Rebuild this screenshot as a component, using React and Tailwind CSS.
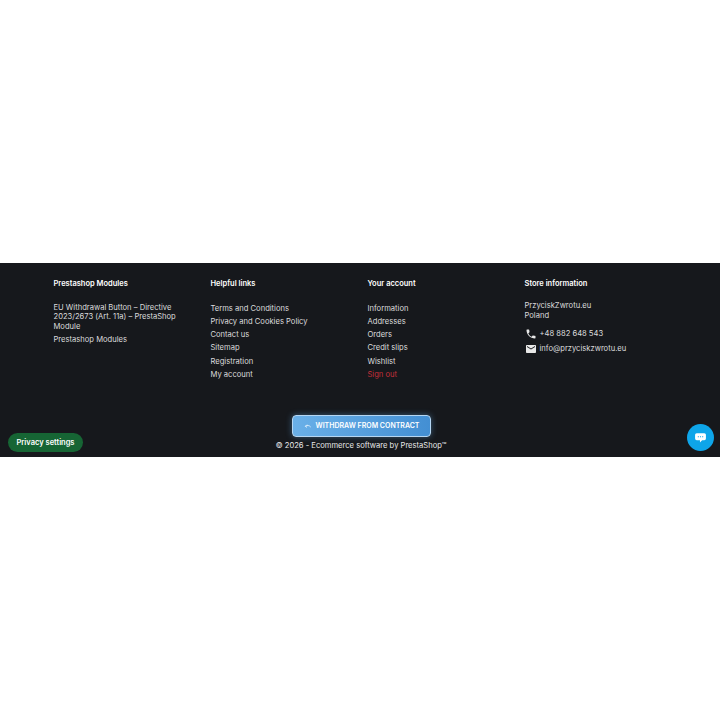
import React from 'react';

const helpful = ['Terms and Conditions', 'Privacy and Cookies Policy', 'Contact us', 'Sitemap', 'Registration', 'My account'];
const account = ['Information', 'Addresses', 'Orders', 'Credit slips', 'Wishlist'];

function Heading({ children }) {
    return <h3 className="text-[7.5px] leading-[12px] font-semibold text-white mb-[11.5px]">{children}</h3>;
}

function LinkList({ items }) {
    return (
        <ul className="flex flex-col">
            {items.map((item) => (
                <li key={item} className="h-[13.3px] leading-[13.3px]">{item}</li>
            ))}
        </ul>
    );
}

export default function App() {
    return (
        <div className="bg-white h-[720px] font-['Inter',sans-serif] flex flex-col">
            <div className="h-[263px]" />

            {/* Footer */}
            <footer className="relative h-[194px] bg-[#16181c] text-[#dcdcdc] text-[7.6px] overflow-hidden">
                <div className="grid grid-cols-[157px_157px_157px_157px] pl-[53.5px] pt-[15px]">
                    <div>
                        <Heading>Prestashop Modules</Heading>
                        <p className="leading-[9.6px] w-[130px] mt-[12.5px] mb-[4px]">EU Withdrawal Button – Directive 2023/2673 (Art. 11a) – PrestaShop Module</p>
                        <p className="leading-[9.6px]">Prestashop Modules</p>
                    </div>
                    <div>
                        <Heading>Helpful links</Heading>
                        <LinkList items={helpful} />
                    </div>
                    <div>
                        <Heading>Your account</Heading>
                        <LinkList items={account} />
                        <div className="h-[13.3px] leading-[13.3px] text-[#c42f3a]">Sign out</div>
                    </div>
                    <div>
                        <Heading>Store information</Heading>
                        <p className="leading-[9.6px] -mt-[0.5px] mb-[6px]">PrzyciskZwrotu.eu<br />Poland</p>
                        <div className="flex items-center gap-[3px] h-[15px]">
                            <svg width="12" height="12" viewBox="0 0 24 24" fill="#e8e8e8">
                                <path d="M6.6 10.8c1.4 2.8 3.8 5.1 6.6 6.6l2.2-2.2c.3-.3.7-.4 1-.2 1.1.4 2.3.6 3.6.6.6 0 1 .4 1 1V20c0 .6-.4 1-1 1C10.6 21 3 13.4 3 4c0-.6.4-1 1-1h3.5c.6 0 1 .4 1 1 0 1.3.2 2.5.6 3.6.1.3 0 .7-.2 1z" />
                            </svg>
                            <span>+48 882 648 543</span>
                        </div>
                        <div className="flex items-center gap-[3px] h-[15px]">
                            <svg width="12" height="12" viewBox="0 0 24 24" fill="#e8e8e8">
                                <path d="M20 4H4c-1.1 0-2 .9-2 2v12c0 1.1.9 2 2 2h16c1.1 0 2-.9 2-2V6c0-1.1-.9-2-2-2zm0 4-8 5-8-5V6l8 5 8-5z" />
                            </svg>
                            <span>info@przyciskzwrotu.eu</span>
                        </div>
                    </div>
                </div>

                {/* Withdraw button and copyright */}
                <div className="absolute left-[3px] right-0 top-[152px] flex flex-col items-center">
                    <button className="w-[139px] h-[22px] rounded-[4px] border border-[#b5d6f2] bg-gradient-to-r from-[#6ab0e8] to-[#438fd3] shadow-[0_0_6px_rgba(98,170,230,0.45)] flex items-center justify-center gap-[4px] text-white text-[7px] font-semibold">
                        <svg width="8" height="8" viewBox="0 0 24 24" fill="none" stroke="#d9ecfb" strokeWidth="3">
                            <path d="M9 8 4 13l5 3M4 13c6-4 12-3 16 2" />
                        </svg>
                        WITHDRAW FROM CONTRACT
                    </button>
                    <p className="mt-[3px] -ml-[1px] leading-[11px] text-[#e8e9ea]">© 2026 - Ecommerce software by PrestaShop™</p>
                </div>

                {/* Privacy settings */}
                <div className="absolute left-[8px] top-[170px] w-[75px] h-[19px] rounded-full bg-[#166534] flex items-center justify-center text-white text-[7.5px] font-semibold">
                    Privacy settings
                </div>

                {/* Chat bubble */}
                <div className="absolute left-[687px] top-[161px] w-[27px] h-[27px] rounded-full bg-[#0ea5e9] flex items-center justify-center">
                    <svg width="13" height="13" viewBox="0 0 24 24">
                        <path fill="#fff" d="M5 4h14a3 3 0 0 1 3 3v7a3 3 0 0 1-3 3h-4l-4 4v-4H5a3 3 0 0 1-3-3V7a3 3 0 0 1 3-3z" />
                        <path fill="#0ea5e9" d="M7 9.5h2v2H7zM11 9.5h2v2h-2zM15 9.5h2v2h-2z" />
                    </svg>
                </div>
            </footer>
        </div>
    );
}
